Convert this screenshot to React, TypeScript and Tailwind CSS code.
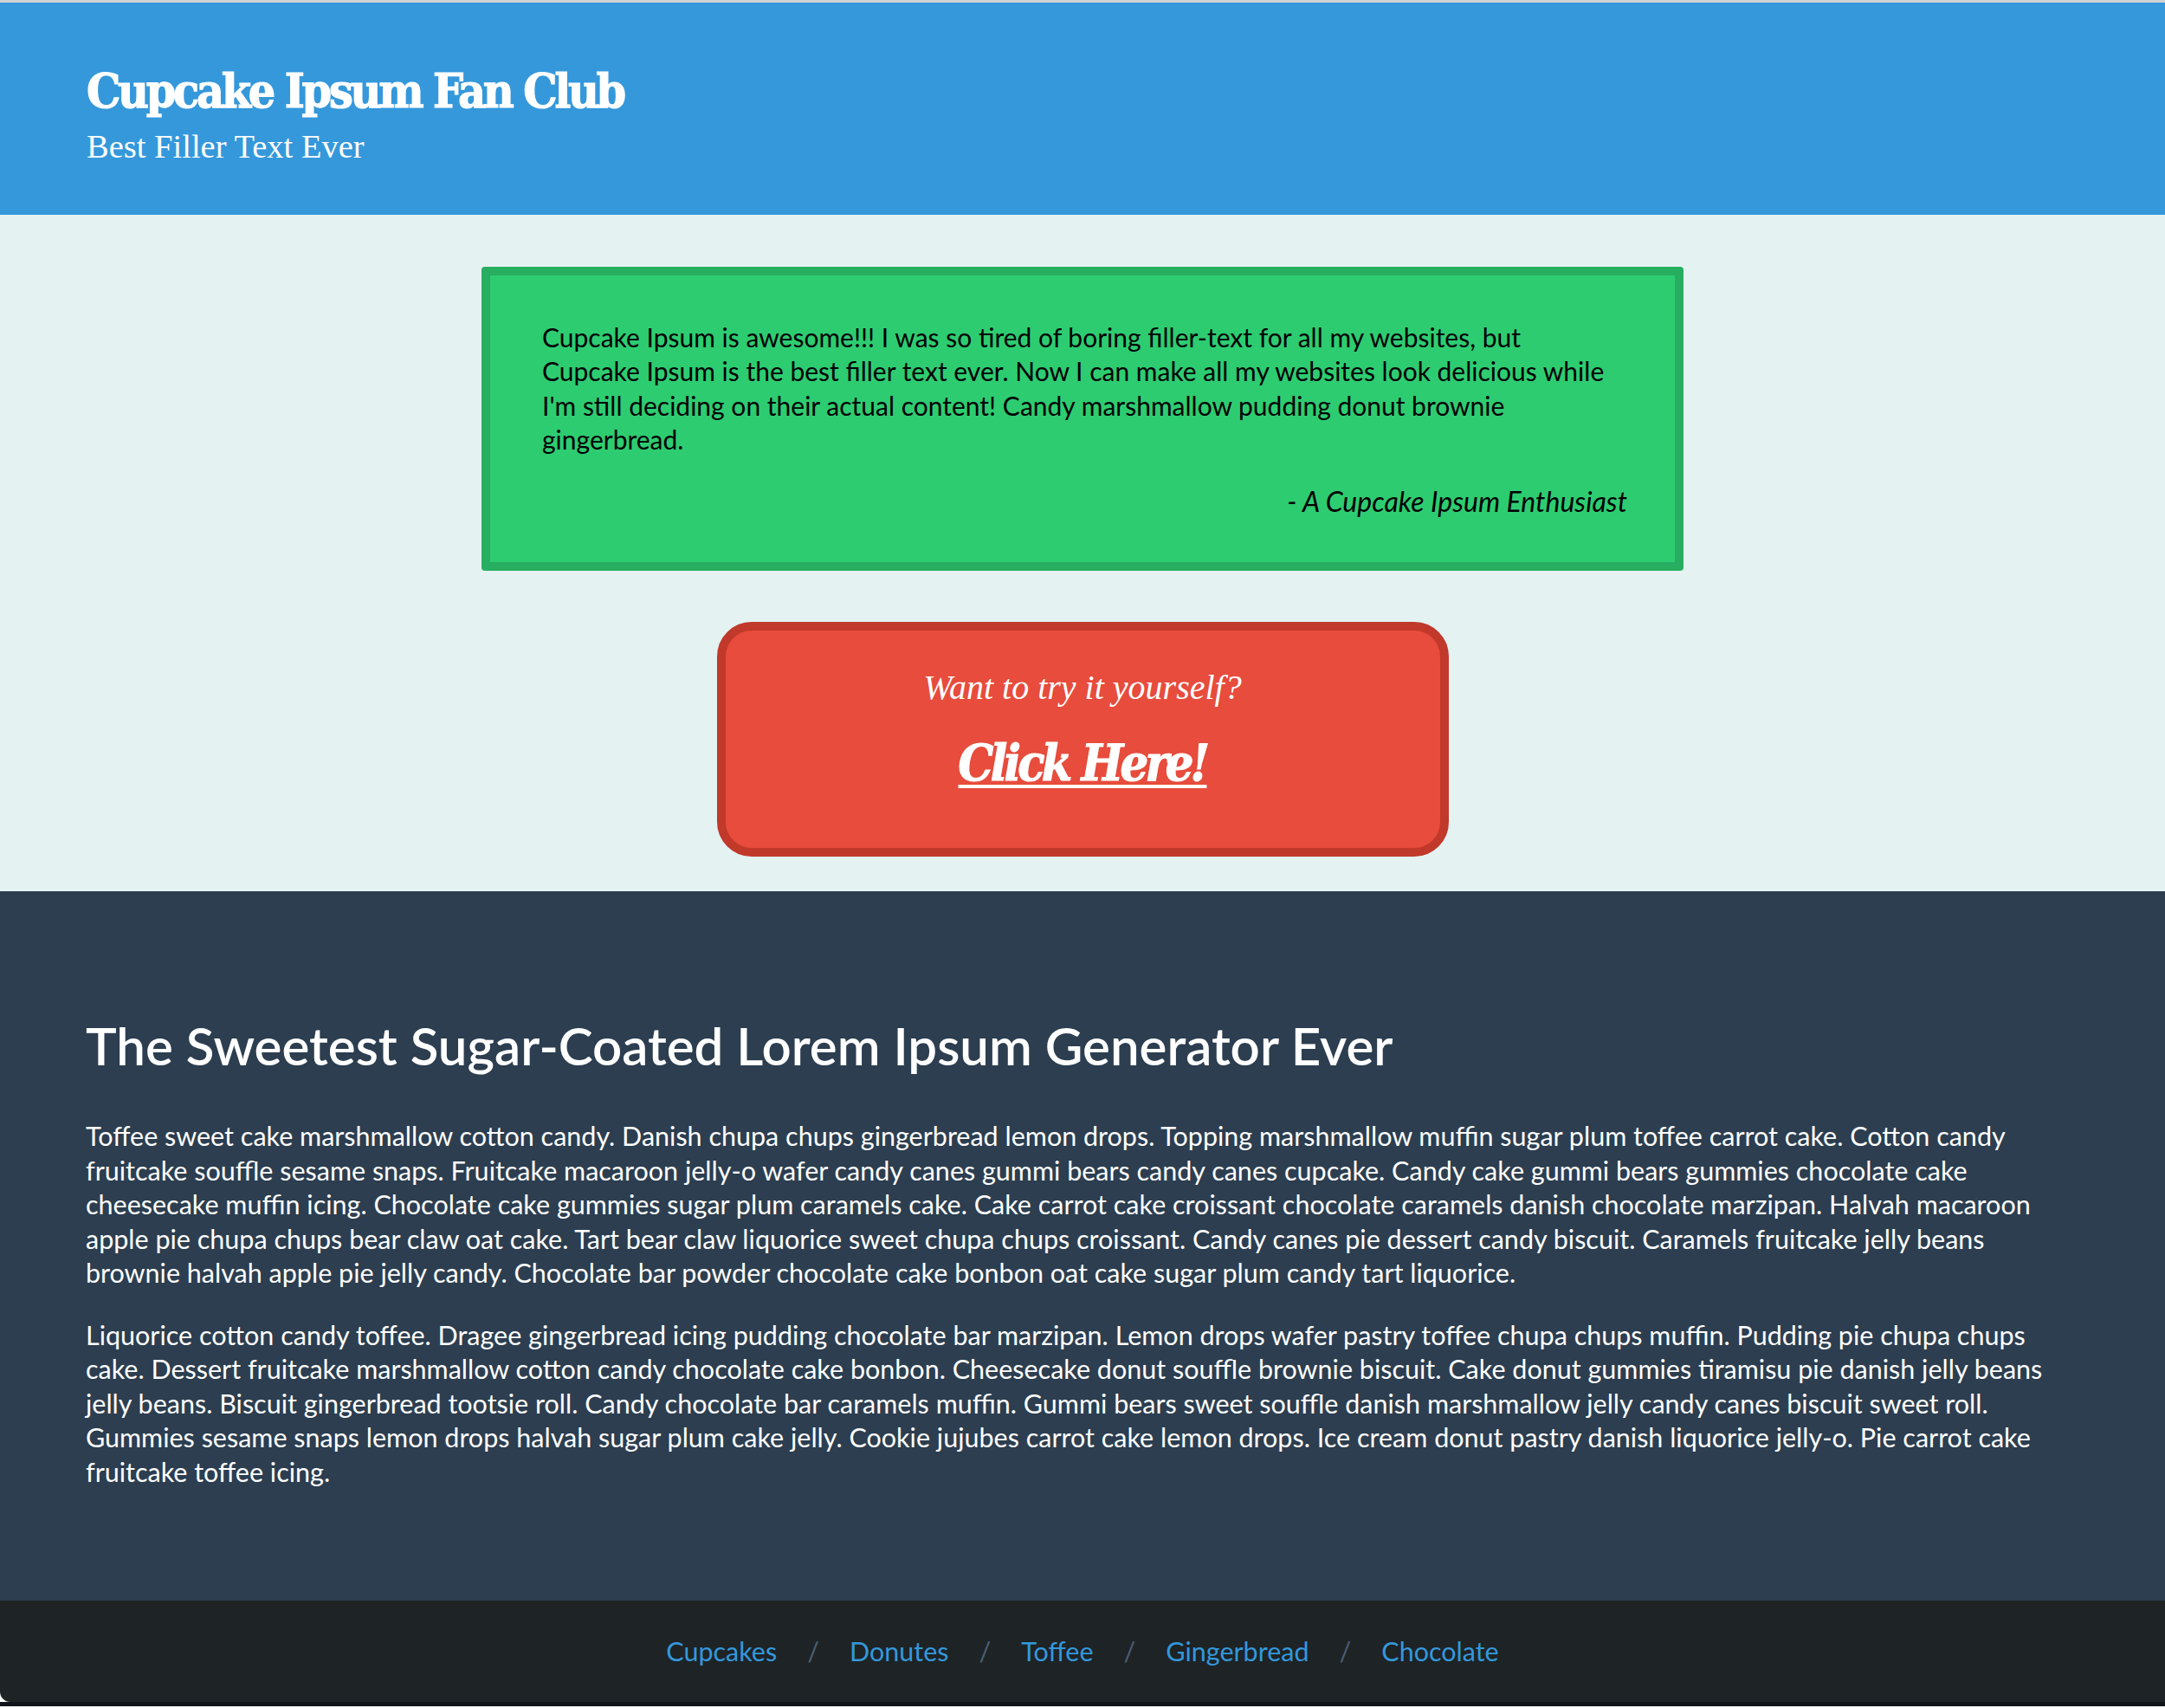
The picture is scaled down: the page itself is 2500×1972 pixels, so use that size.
import React from "react";

const sans = "font-['Lato',sans-serif]";

export default function App() {
  const links = ["Cupcakes", "Donutes", "Toffee", "Gingerbread", "Chocolate"];
  return (
    <div className={`w-full ${sans}`}>
      <div className="h-[3px] bg-[#d2d2d2]" />
      <header className="bg-[#3598db] h-[245px] pt-[74px] px-[100px] text-white">
        <h1 className="font-['DejaVu_Serif',serif] font-bold font-stretch-condensed text-[55px] leading-none tracking-[-0.06em] [-webkit-text-stroke:1.2px_white]">
          Cupcake Ipsum Fan Club
        </h1>
        <p className="font-['Liberation_Serif',serif] text-[38.5px] leading-none mt-[18px]">
          Best Filler Text Ever
        </p>
      </header>

      <main className="bg-[#e4f2f2] pt-[60px] pb-[40px] flex flex-col items-center gap-[59px]">
        <div className="w-[1388px] border-[10px] border-[#27ae60] bg-[#2ecc71] rounded-[4px] pl-[60px] pr-[64px] pt-[52px] pb-[51px] text-black text-[30px] leading-[39.3px]">
          <p>
            Cupcake Ipsum is awesome!!! I was so tired of boring filler-text for all my websites, but
            Cupcake Ipsum is the best filler text ever. Now I can make all my websites look delicious
            while I'm still deciding on their actual content! Candy marshmallow pudding donut brownie
            gingerbread.
          </p>
          <p className="mt-[32px] mr-[-9px] text-right italic text-[32px]">- A Cupcake Ipsum Enthusiast</p>
        </div>

        <div className="w-[845px] h-[271px] border-[10px] border-[#c0392b] bg-[#e74c3c] rounded-[40px] flex flex-col items-center text-white pt-[46px]">
          <p className="font-['Liberation_Serif',serif] italic text-[40px] leading-none">
            Want to try it yourself?
          </p>
          <a
            href="#"
            className="mt-[38px] font-['DejaVu_Serif',serif] font-bold italic font-stretch-condensed text-[57px] leading-none tracking-[-0.065em] [-webkit-text-stroke:1.2px_white] underline decoration-[4px] underline-offset-[5px]"
          >
            Click Here!
          </a>
        </div>
      </main>

      <section className="bg-[#2c3e50] text-white px-[99px] pt-[142px] pb-[129px]">
        <h2 className="font-semibold text-[60px] leading-[1.2]">
          The Sweetest Sugar-Coated Lorem Ipsum Generator Ever
        </h2>
        <p className="mt-[49px] text-[30.5px] leading-[39.5px]">
          Toffee sweet cake marshmallow cotton candy. Danish chupa chups gingerbread lemon drops.
          Topping marshmallow muffin sugar plum toffee carrot cake. Cotton candy fruitcake souffle
          sesame snaps. Fruitcake macaroon jelly-o wafer candy canes gummi bears candy canes cupcake.
          Candy cake gummi bears gummies chocolate cake cheesecake muffin icing. Chocolate cake
          gummies sugar plum caramels cake. Cake carrot cake croissant chocolate caramels danish
          chocolate marzipan. Halvah macaroon apple pie chupa chups bear claw oat cake. Tart bear claw
          liquorice sweet chupa chups croissant. Candy canes pie dessert candy biscuit. Caramels
          fruitcake jelly beans brownie halvah apple pie jelly candy. Chocolate bar powder chocolate
          cake bonbon oat cake sugar plum candy tart liquorice.
        </p>
        <p className="mt-[32px] text-[30.5px] leading-[39.5px]">
          Liquorice cotton candy toffee. Dragee gingerbread icing pudding chocolate bar marzipan.
          Lemon drops wafer pastry toffee chupa chups muffin. Pudding pie chupa chups cake. Dessert
          fruitcake marshmallow cotton candy chocolate cake bonbon. Cheesecake donut souffle brownie
          biscuit. Cake donut gummies tiramisu pie danish jelly beans jelly beans. Biscuit gingerbread
          tootsie roll. Candy chocolate bar caramels muffin. Gummi bears sweet souffle danish
          marshmallow jelly candy canes biscuit sweet roll. Gummies sesame snaps lemon drops halvah
          sugar plum cake jelly. Cookie jujubes carrot cake lemon drops. Ice cream donut pastry danish
          liquorice jelly-o. Pie carrot cake fruitcake toffee icing.
        </p>
      </section>

      <footer className="bg-[#1e2326] h-[117px] rounded-bl-[12px] flex items-center justify-center text-[30.5px]">
        {links.map((l, i) => (
          <React.Fragment key={l}>
            {i > 0 && <span className="mx-[35px] text-[#4b5e73]">/</span>}
            <a href="#" className="text-[#3498db]">
              {l}
            </a>
          </React.Fragment>
        ))}
      </footer>
      <div className="h-[5px] bg-[#101519]" />
    </div>
  );
}
